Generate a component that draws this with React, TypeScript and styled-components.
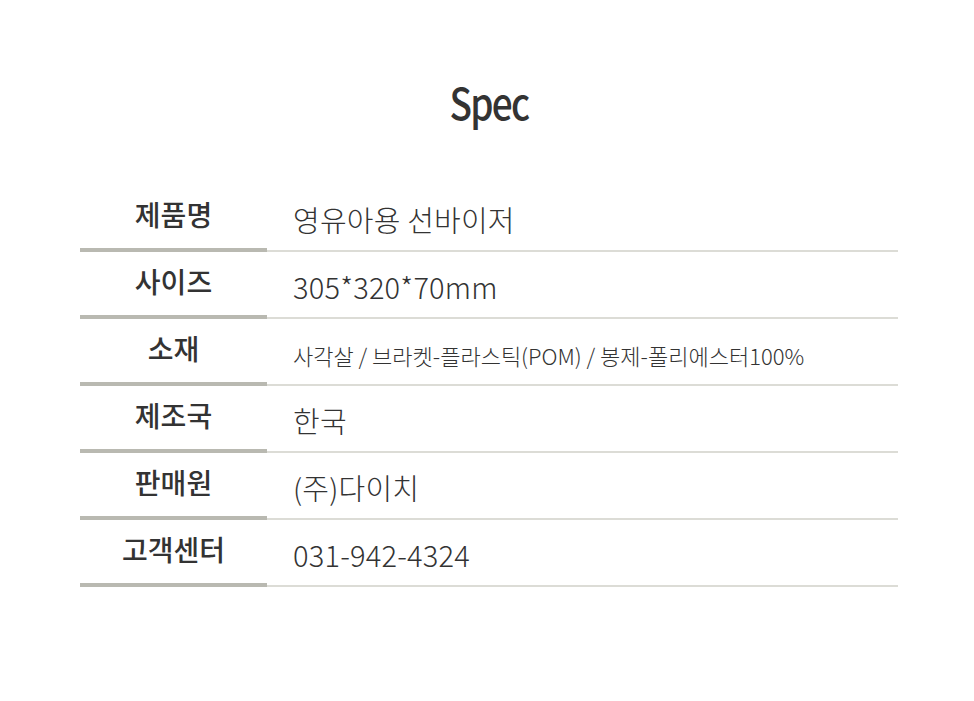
import React from "react";
import styled, { createGlobalStyle } from "styled-components";

const Global = createGlobalStyle`
  html, body { margin: 0; padding: 0; background: #ffffff; }
  body { font-family: "Noto Sans CJK KR", "Noto Sans", sans-serif; color: #333333; }
`;

const Page = styled.div`
  width: 974px;
  height: 701px;
  box-sizing: border-box;
  padding: 75px 76px 0 80px;
`;

const Title = styled.h1`
  margin: 0;
  height: 53px;
  text-align: center;
  font-family: "Noto Sans CJK KR", sans-serif;
  font-weight: 500;
  font-size: 43px;
  line-height: 53px;
  letter-spacing: -2px;
  color: #333333;
  transform: scaleX(0.86);
`;

const Table = styled.div`
  margin-top: 57px;
  display: grid;
  grid-template-columns: 187px 1fr;
`;

const Label = styled.div`
  height: 67px;
  box-sizing: border-box;
  border-bottom: 4px solid #b9b9b1;
  display: flex;
  align-items: center;
  justify-content: center;
  padding-bottom: 5px;
  font-weight: 500;
  font-size: 28px;
  color: #333333;
`;

const Value = styled.div<{ $small?: boolean }>`
  height: 67px;
  box-sizing: border-box;
  border-bottom: 2px solid #dcdcd6;
  display: flex;
  align-items: center;
  padding-left: 26px;
  padding-top: ${(p) => (p.$small ? "6px" : "3px")};
  font-weight: 300;
  font-size: ${(p) => (p.$small ? "22px" : "29px")};
  letter-spacing: ${(p) => (p.$small ? "0" : "0.2px")};
  color: #333333;
  white-space: nowrap;
`;

const rows: { label: string; value: string; small?: boolean }[] = [
  { label: "제품명", value: "영유아용 선바이저" },
  { label: "사이즈", value: "305*320*70mm" },
  { label: "소재", value: "사각살 / 브라켓-플라스틱(POM) / 봉제-폴리에스터100%", small: true },
  { label: "제조국", value: "한국" },
  { label: "판매원", value: "(주)다이치" },
  { label: "고객센터", value: "031-942-4324" },
];

export default function App() {
  return (
    <Page>
      <Global />
      <Title>Spec</Title>
      <Table>
        {rows.map((r) => (
          <React.Fragment key={r.label}>
            <Label>{r.label}</Label>
            <Value $small={r.small}>{r.value}</Value>
          </React.Fragment>
        ))}
      </Table>
    </Page>
  );
}
